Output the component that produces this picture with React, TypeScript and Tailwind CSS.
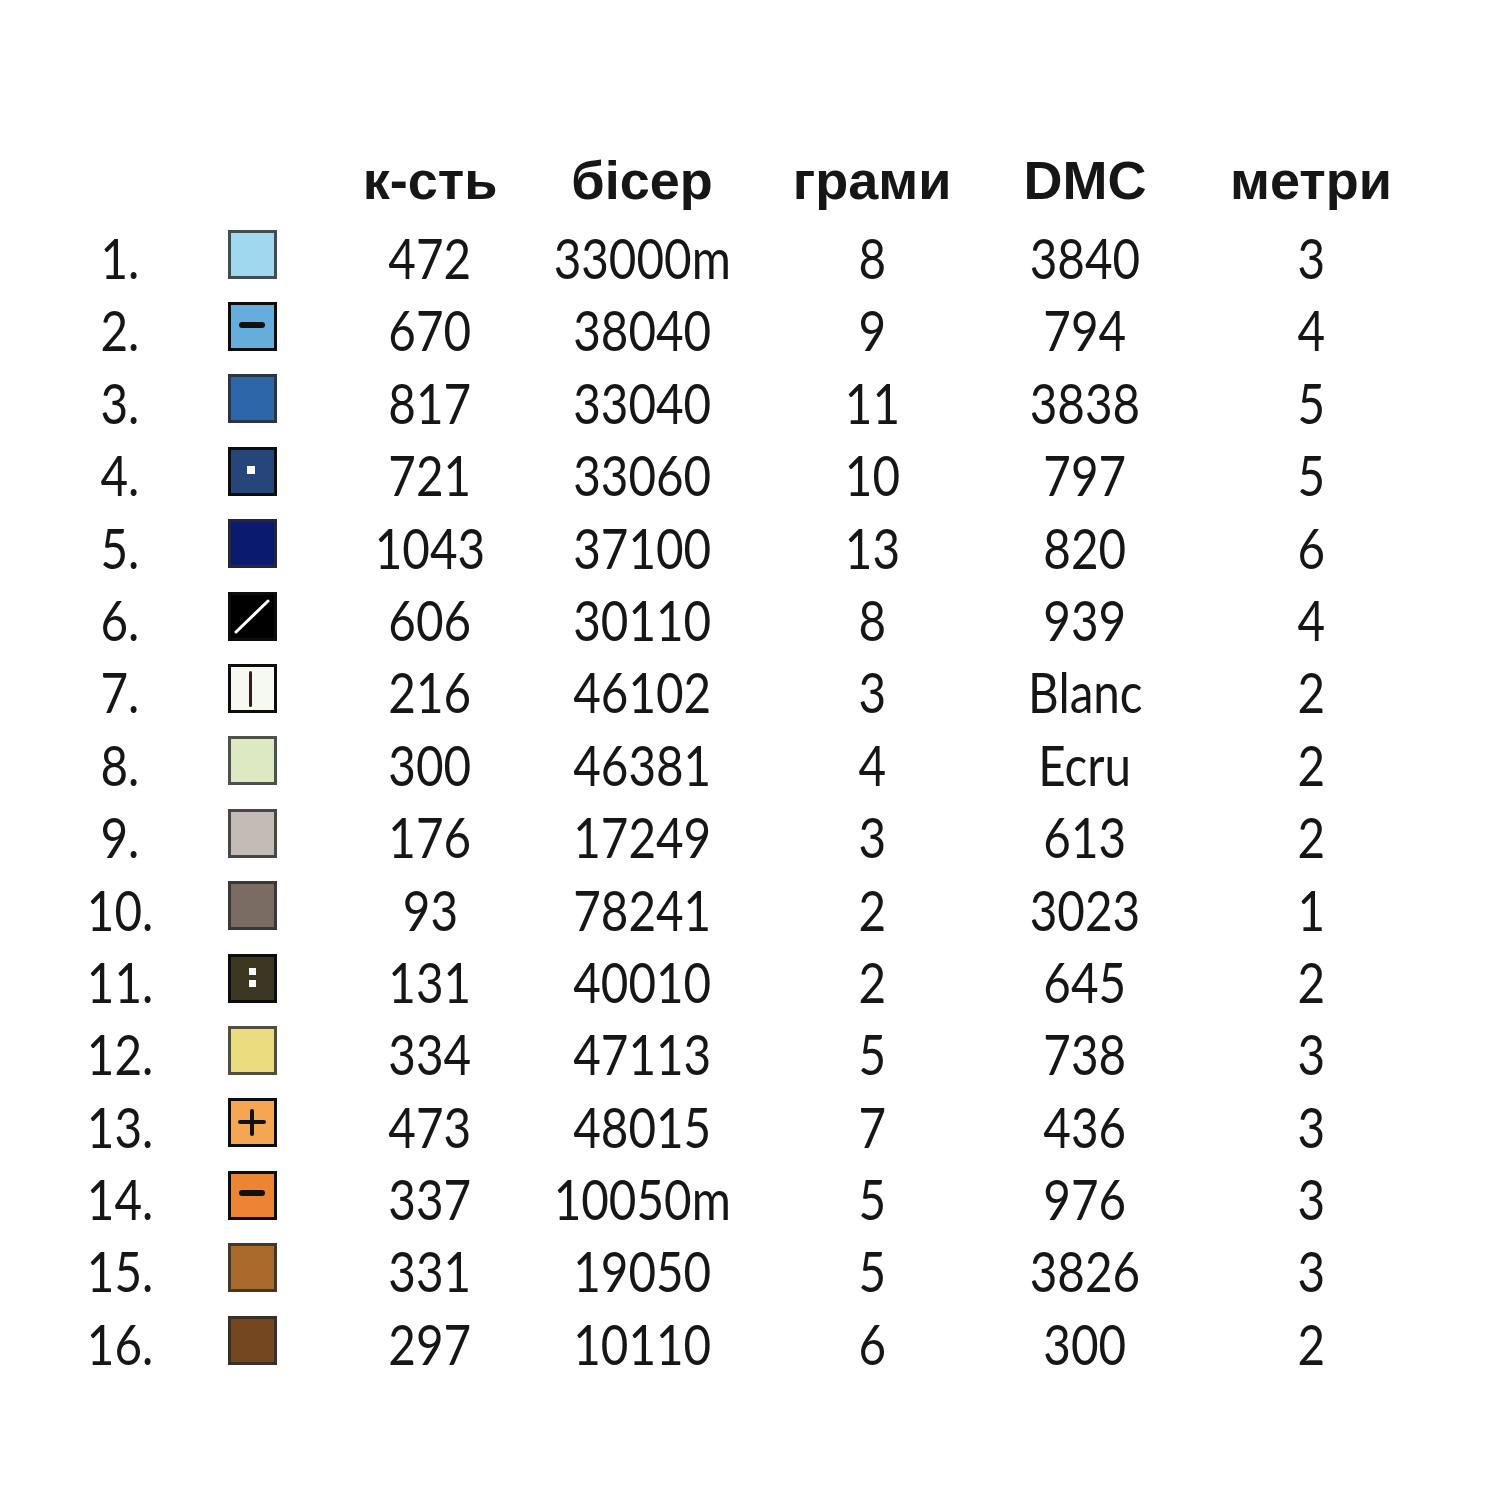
import React from "react";

type Sym = "none" | "minus" | "dot" | "slash" | "vbar" | "dots2" | "plus";

const rows: { n: string; color: string; sym: Sym; q: string; b: string; g: string; d: string; m: string; strong?: boolean }[] = [
  { n: "1.", color: "#9fd8ef", sym: "none", q: "472", b: "33000m", g: "8", d: "3840", m: "3" },
  { n: "2.", color: "#65addb", sym: "minus", q: "670", b: "38040", g: "9", d: "794", m: "4", strong: true },
  { n: "3.", color: "#2d66a9", sym: "none", q: "817", b: "33040", g: "11", d: "3838", m: "5" },
  { n: "4.", color: "#26467a", sym: "dot", q: "721", b: "33060", g: "10", d: "797", m: "5", strong: true },
  { n: "5.", color: "#0a1a6e", sym: "none", q: "1043", b: "37100", g: "13", d: "820", m: "6" },
  { n: "6.", color: "#000000", sym: "slash", q: "606", b: "30110", g: "8", d: "939", m: "4", strong: true },
  { n: "7.", color: "#f6f8f2", sym: "vbar", q: "216", b: "46102", g: "3", d: "Blanc", m: "2", strong: true },
  { n: "8.", color: "#dce9c2", sym: "none", q: "300", b: "46381", g: "4", d: "Ecru", m: "2" },
  { n: "9.", color: "#c3bbb6", sym: "none", q: "176", b: "17249", g: "3", d: "613", m: "2" },
  { n: "10.", color: "#7a6c63", sym: "none", q: "93", b: "78241", g: "2", d: "3023", m: "1" },
  { n: "11.", color: "#3c3723", sym: "dots2", q: "131", b: "40010", g: "2", d: "645", m: "2", strong: true },
  { n: "12.", color: "#ebdd7f", sym: "none", q: "334", b: "47113", g: "5", d: "738", m: "3" },
  { n: "13.", color: "#f6a653", sym: "plus", q: "473", b: "48015", g: "7", d: "436", m: "3", strong: true },
  { n: "14.", color: "#ec8532", sym: "minus", q: "337", b: "10050m", g: "5", d: "976", m: "3", strong: true },
  { n: "15.", color: "#a96a2b", sym: "none", q: "331", b: "19050", g: "5", d: "3826", m: "3" },
  { n: "16.", color: "#754720", sym: "none", q: "297", b: "10110", g: "6", d: "300", m: "2" },
];

function Symbol({ sym }: { sym: Sym }) {
  switch (sym) {
    case "minus":
      return <div className="w-[26px] h-[6px] rounded-full bg-[#111] -translate-y-[2px]" />;
    case "plus":
      return (
        <svg width="30" height="30" viewBox="0 0 30 30">
          <path d="M3 14h24M15 3v23" stroke="#111" strokeWidth="4" strokeLinecap="round" />
        </svg>
      );
    case "dot":
      return <div className="w-[8px] h-[8px] bg-white -translate-x-[1px] -translate-y-[1px]" />;
    case "dots2":
      return (
        <div className="flex flex-col gap-[5px] -translate-y-[1px]">
          <div className="w-[7px] h-[7px] bg-white" />
          <div className="w-[7px] h-[7px] bg-white" />
        </div>
      );
    case "slash":
      return (
        <svg width="43" height="43" viewBox="0 0 43 43">
          <path d="M5 37L37 6" stroke="#ffffff" strokeWidth="3" strokeLinecap="round" />
        </svg>
      );
    case "vbar":
      return <div className="w-[3px] h-[36px] rounded-full bg-[#3a1a12] -translate-x-[2px]" />;
    default:
      return null;
  }
}

function Cell({ children }: { children: React.ReactNode }) {
  return (
    <div className="flex justify-center items-center">
      <span className="inline-block whitespace-nowrap scale-x-[0.85] -translate-y-[2px]">{children}</span>
    </div>
  );
}

export default function App() {
  return (
    <div
      className="w-[1500px] h-[1500px] bg-white text-[#161616]"
      style={{ fontFamily: '"Liberation Sans", Arial, sans-serif' }}
    >
      <div className="pt-[144px] pl-[40px]">
        <div className="grid grid-cols-[160px_104px_252px_172px_288px_138px_314px] h-[72px] mb-[8px] text-[54px] font-bold leading-[72px] items-center">
          <div />
          <div />
          <div className="flex justify-center whitespace-nowrap">к-сть</div>
          <div className="flex justify-center whitespace-nowrap">бісер</div>
          <div className="flex justify-center whitespace-nowrap">грами</div>
          <div className="flex justify-center whitespace-nowrap">DMC</div>
          <div className="flex justify-center whitespace-nowrap">метри</div>
        </div>
        <div
          className="flex flex-col font-normal"
          style={{ fontFamily: 'Lato, "Liberation Sans", Arial, sans-serif' }}
        >
          {rows.map((r) => (
            <div
              key={r.n}
              className="grid grid-cols-[160px_104px_252px_172px_288px_138px_314px] h-[72.4px] text-[56px] leading-[72.4px]"
            >
              <Cell>{r.n}</Cell>
              <div className="flex justify-center items-center">
                <div
                  className={`w-[49px] h-[49px] -translate-y-[6px] border-[3px] flex items-center justify-center ${
                    r.strong ? "border-[#0d0d0d]" : "border-[#2a2a2a]/80"
                  }`}
                  style={{ backgroundColor: r.color }}
                >
                  <Symbol sym={r.sym} />
                </div>
              </div>
              <Cell>{r.q}</Cell>
              <Cell>{r.b}</Cell>
              <Cell>{r.g}</Cell>
              <Cell>{r.d}</Cell>
              <Cell>{r.m}</Cell>
            </div>
          ))}
        </div>
      </div>
    </div>
  );
}
